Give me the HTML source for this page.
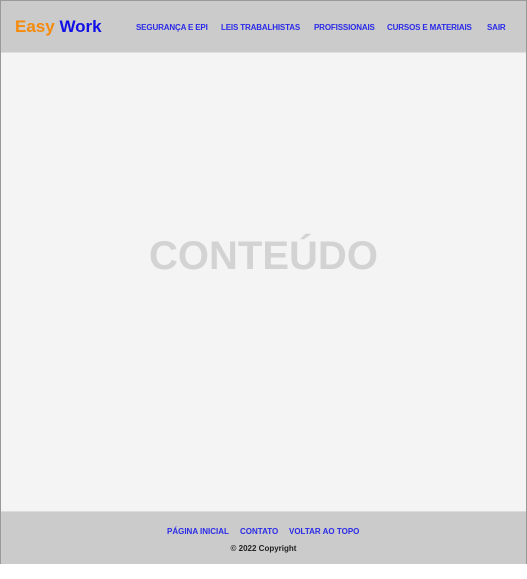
<!DOCTYPE html>
<html><head><style>
*{margin:0;padding:0;box-sizing:border-box}
body{width:527px;height:579px;background:#fff;font-family:"Liberation Sans",Arial,sans-serif;position:relative}
.wrap{position:absolute;left:0;top:0;width:527px;height:564px;border:1px solid #999;background:#f4f4f4}
.hdr{position:absolute;left:0;top:0;width:525px;height:52px;background:#cbcbcb;border-bottom:1px solid #e0e0e0}
.logo{position:absolute;left:14px;top:16px;font-size:17px;font-weight:bold;line-height:20px}
.logo .a{color:#f58a0b}.logo .b{color:#1010e6}
.nav{position:absolute;top:22px;font-size:8px;font-weight:bold;color:#2a2ae8;letter-spacing:-0.15px;line-height:10px}
.main{position:absolute;left:0;top:232px;width:525px;text-align:center;font-size:40px;font-weight:bold;color:#d3d3d3;line-height:46px}
.ftr{position:absolute;left:0;top:510px;width:525px;height:53px;background:#cbcbcb;border-top:1px solid #dcdcdc}
.fl{position:absolute;top:15px;font-size:8px;font-weight:bold;color:#2a2ae8;line-height:10px}
.cp{position:absolute;left:0;width:525px;top:32px;text-align:center;font-size:8px;font-weight:bold;color:#222;line-height:10px}
</style></head><body>
<div class="wrap">
<div class="hdr">
<div class="logo"><span class="a">Easy</span> <span class="b">Work</span></div>
<div class="nav" style="left:135px">SEGURANÇA E EPI</div>
<div class="nav" style="left:220px">LEIS TRABALHISTAS</div>
<div class="nav" style="left:313px">PROFISSIONAIS</div>
<div class="nav" style="left:386px">CURSOS E MATERIAIS</div>
<div class="nav" style="left:486px">SAIR</div>
</div>
<div class="main">CONTEÚDO</div>
<div class="ftr">
<div class="fl" style="left:166px">PÁGINA INICIAL</div>
<div class="fl" style="left:239px">CONTATO</div>
<div class="fl" style="left:288px">VOLTAR AO TOPO</div>
<div class="cp">© 2022 Copyright</div>
</div>
</div>
</body></html>
